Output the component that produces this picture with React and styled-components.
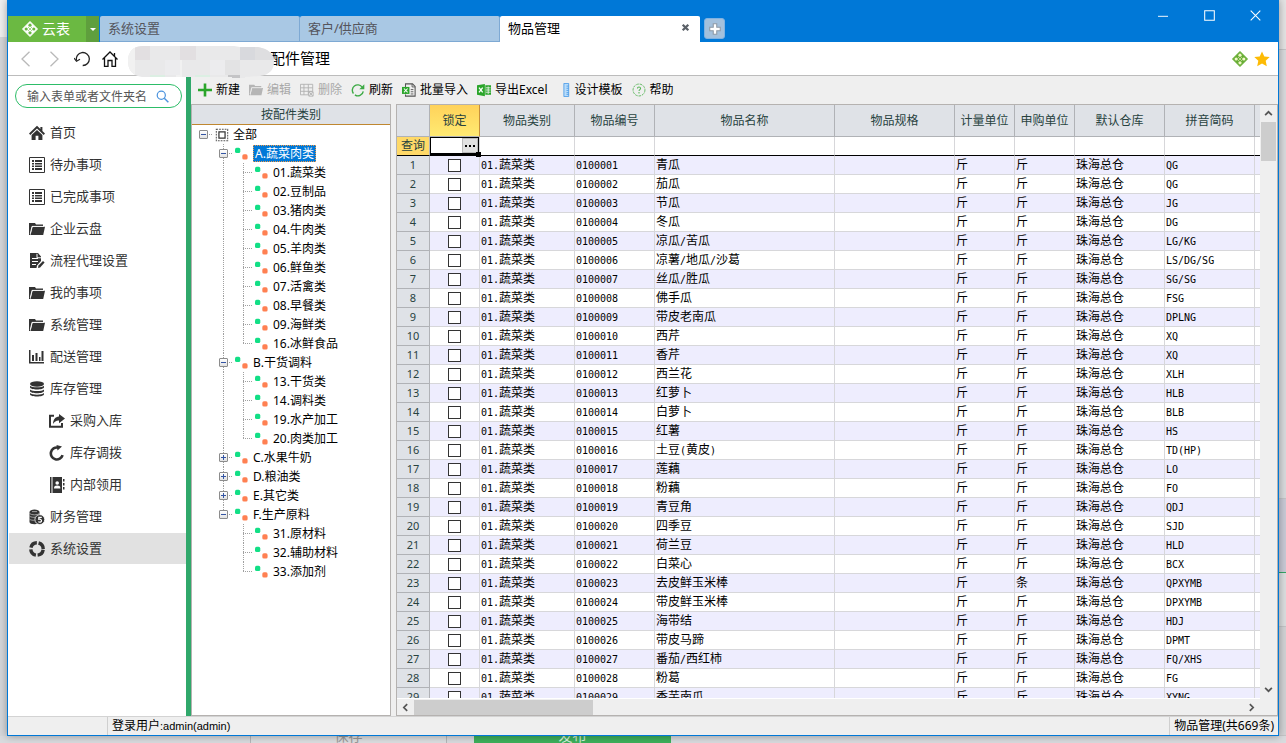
import React, { useState } from "react";
import styled, { createGlobalStyle, css } from "styled-components";

const menu = [
  { icon: "home", label: "首页" },
  { icon: "list", label: "待办事项" },
  { icon: "list", label: "已完成事项" },
  { icon: "folder", label: "企业云盘" },
  { icon: "docEdit", label: "流程代理设置" },
  { icon: "folder", label: "我的事项" },
  { icon: "folder", label: "系统管理" },
  { icon: "chart", label: "配送管理" },
  { icon: "stack", label: "库存管理" },
  { icon: "share", label: "采购入库", sub: true },
  { icon: "redo", label: "库存调拨", sub: true },
  { icon: "contacts", label: "内部领用", sub: true },
  { icon: "coins", label: "财务管理" },
  { icon: "ring", label: "系统设置" },
];

const tools = [
  { icon: "plus", label: "新建" },
  { icon: "edit", label: "编辑", disabled: true },
  { icon: "remove", label: "删除", disabled: true },
  { icon: "refresh", label: "刷新" },
  { icon: "importFile", label: "批量导入" },
  { icon: "exportFile", label: "导出Excel" },
  { icon: "ruler", label: "设计模板" },
  { icon: "help", label: "帮助" },
];

const categories = [
  {
    label: "A.蔬菜肉类",
    children: [
      "01.蔬菜类",
      "02.豆制品",
      "03.猪肉类",
      "04.牛肉类",
      "05.羊肉类",
      "06.鲜鱼类",
      "07.活禽类",
      "08.早餐类",
      "09.海鲜类",
      "16.冰鲜食品",
    ],
  },
  { label: "B.干货调料", children: ["13.干货类", "14.调料类", "19.水产加工", "20.肉类加工"] },
  { label: "C.水果牛奶" },
  { label: "D.粮油类" },
  { label: "E.其它类" },
  { label: "F.生产原料", children: ["31.原材料", "32.辅助材料", "33.添加剂"] },
];

const columns = [
  { title: "物品类别", width: 95 },
  { title: "物品编号", width: 80 },
  { title: "物品名称", width: 180 },
  { title: "物品规格", width: 120 },
  { title: "计量单位", width: 60 },
  { title: "申购单位", width: 60 },
  { title: "默认仓库", width: 90 },
  { title: "拼音简码", width: 90 },
  { title: "计价单位" },
];

const items = [
  ["青瓜", "QG"],
  ["茄瓜", "QG"],
  ["节瓜", "JG"],
  ["冬瓜", "DG"],
  ["凉瓜/苦瓜", "LG/KG"],
  ["凉薯/地瓜/沙葛", "LS/DG/SG"],
  ["丝瓜/胜瓜", "SG/SG"],
  ["佛手瓜", "FSG"],
  ["带皮老南瓜", "DPLNG"],
  ["西芹", "XQ"],
  ["香芹", "XQ"],
  ["西兰花", "XLH"],
  ["红萝卜", "HLB"],
  ["白萝卜", "BLB"],
  ["红薯", "HS"],
  ["土豆(黄皮)", "TD(HP)"],
  ["莲藕", "LO"],
  ["粉藕", "FO"],
  ["青豆角", "QDJ"],
  ["四季豆", "SJD"],
  ["荷兰豆", "HLD"],
  ["白菜心", "BCX"],
  ["去皮鲜玉米棒", "QPXYMB", "条"],
  ["带皮鲜玉米棒", "DPXYMB"],
  ["海带结", "HDJ"],
  ["带皮马蹄", "DPMT"],
  ["番茄/西红柿", "FQ/XHS"],
  ["粉葛", "FG"],
  ["香芋南瓜", "XYNG"],
];

const Svg = ({ size = 16, children }) => (
  <svg width={size} height={size} viewBox="0 0 16 16" fill="none" aria-hidden="true">
    {children}
  </svg>
);

const Folder = ({ color, light }) => (
  <>
    <path d="M0 2h6l1 1.500h7V5H3L1.200 12.500V14H0z" fill={color} />
    <path d="M3.600 5.800H16L14.200 14H1.600z" fill={color} />
    <path d="M1.300 12.600 3 5.400h12" stroke={light} strokeWidth=".8" />
  </>
);

const icons = {
  home: (
    <>
      <path d="M8 .8 0 8.600l1.300 1.300L8 3.600l6.700 6.300L16 8.600l-2.600-2.500V2h-2v2.100z" fill="#333" />
      <path d="M8 4.900 2.600 10v5h4v-4.200h2.800V15h4v-5z" fill="#333" />
    </>
  ),
  list: (
    <>
      <path d="M.5.5h15v15H.5z" stroke="#333" />
      <path d="M3 3h2v2H3zM6 3h7v2H6zM3 6h2v1.500H3zM6 6h7v1.500H6zM3 8.600h2V10H3zM6 8.600h7V10H6zM3 11h2v2H3zM6 11h7v2H6z" fill="#333" />
    </>
  ),
  folder: <Folder color="#333" light="#fff" />,
  docEdit: (
    <>
      <path d="M1 0h8l3 3.500V8l-4 4.500L7.500 15H1z" fill="#333" />
      <path d="M3 5.500h6M3 8.500h6M3 11.500h4" stroke="#fff" strokeWidth="1.200" />
      <path d="M8 .8v4h4" stroke="#fff" />
      <path d="m9 15 .5-2.500L14 8l1.600 1.600-4.500 4.800z" fill="#333" />
    </>
  ),
  chart: <path d="M0 1h1.500v12H15v1.600H0zM3 6h2v6H3zM6.500 4h2v8h-2zM10 8h1.500v4H10zM12.500 2h2v10h-2z" fill="#333" />,
  stack: (
    <>
      <ellipse cx="8" cy="3" rx="7" ry="2.700" fill="#333" />
      <path d="M1 4.700c2 2.200 12 2.200 14 0v1.600c0 3-14 3-14 0zM1 8.400c2 2.200 12 2.200 14 0V10c0 3-14 3-14 0zM1 12.100c2 2.200 12 2.200 14 0v1.200c0 3-14 3-14 0z" fill="#333" />
    </>
  ),
  share: (
    <>
      <path d="M5 2.700H1v11h12V10" stroke="#333" strokeWidth="2" />
      <path d="M10 1l6 4.600-6 4.600V7.400C7.400 7.200 5.500 8.400 4 11c.2-4.500 2.200-7.200 6-7.500z" fill="#333" />
    </>
  ),
  redo: (
    <>
      <path d="M13.600 10.200A6 6 0 1 1 9 2.600" stroke="#333" strokeWidth="2.600" />
      <path d="M7.500 0 13 1.500 8.500 5.500z" fill="#333" />
    </>
  ),
  contacts: (
    <>
      <path d="M1 0h1.500v16H1zM3.500 0H13v16H3.500zM14 2h1.500v2.500H14zM14 6h1.500v2.500H14zM14 10h1.500v2.500H14z" fill="#333" />
      <circle cx="8.200" cy="6" r="1.800" fill="#fff" />
      <path d="M5 11.500c0-2.400 1.200-3 3.200-3s3.200.6 3.200 3z" fill="#fff" />
    </>
  ),
  coins: (
    <>
      <path d="M.5 3C.5-.5 10.500-.5 10.500 3v10c0 3-10 3-10 0z" fill="#333" />
      <path d="M.5 4.500c2 1.800 8 1.800 10 0M.5 7.200c1.500 1 4 1.400 6 1M.5 10.200c1.500 1 3 1.200 5 1M3 2.600h5" stroke="#ccc" strokeWidth=".7" />
      <circle cx="10.800" cy="10.600" r="4.900" fill="#333" stroke="#fff" strokeWidth=".8" />
      <path d="M12.800 8.300h-3v2c3-.6 3.500 2.400 1.500 2.800-.8.2-1.500 0-2-.5" stroke="#fff" strokeWidth="1.200" />
    </>
  ),
  ring: (
    <circle cx="8" cy="8" r="6.200" stroke="#333" strokeWidth="3.400" strokeDasharray="7.940 1.800" strokeDashoffset="-.9" />
  ),
  plus: <path d="M6.500.5h3v6H16v3H9.500v6h-3v-6H0v-3h6.500z" fill="#2aa52a" />,
  edit: <Folder color="#b5b5b5" light="#efefef" />,
  remove: (
    <>
      <path d="M.5 1.500h14M.5 5.500h14M.5 9.500h14M.5 13.500h9M.5 1.500v12M4.500 1.500v12M9.500 1.500v12M14.500 1.500v8" stroke="#b0b0b0" />
      <path d="m10.500 10.500 4 4m0-4-4 4M10 10h5v5h-5z" stroke="#b0b0b0" />
    </>
  ),
  refresh: (
    <>
      <path d="M14 9.500A6 6 0 0 1 4.500 13.500M2.800 12A6 6 0 0 1 12.500 4.500" stroke="#3daa45" strokeWidth="1.600" />
      <path d="M15.200 1.500v5.700H9.500z" fill="#3daa45" />
    </>
  ),
  importFile: (
    <>
      <path d="M4 5V1h8l3 3v11H4v-2" stroke="#555" strokeWidth="1.200" />
      <path d="M11.500 1v3.500H15M10 7.500h3M10 10h3M10 12.500h3" stroke="#555" />
      <path d="M0 4.500h8.500v8H0z" fill="#2aa52a" />
      <path d="m2.200 6.300 4.200 4.500m0-4.500-4.200 4.500" stroke="#fff" strokeWidth="1.200" />
    </>
  ),
  exportFile: (
    <>
      <path d="M0 2.500 9 1v14l-9-1.500zM9.500 2.500H16v11H9.500z" fill="#2aa52a" />
      <path d="m2.300 5.300 4.200 5.500m0-5.500-4.200 5.500" stroke="#fff" strokeWidth="1.500" />
      <path d="M10 5.500h5.500M10 8h5.500M10 10.500h5.500M12.800 4v8.500" stroke="#e8f5e8" />
    </>
  ),
  ruler: (
    <>
      <path d="M9 .5h5.500v15H9z" fill="#b8dcfa" stroke="#4b9be8" />
      <path d="M12 3.500h2.500M12 6h2.500M12 8.500h2.500M12 11h2.500M12 13h2.500" stroke="#4b9be8" />
    </>
  ),
  help: (
    <>
      <circle cx="8" cy="8" r="6.800" stroke="#58b558" strokeDasharray="3 1" />
      <path d="M6.200 6.300C6.200 4 9.800 4 9.800 6.200c0 1.300-1.800 1.400-1.800 3M8 10.400V12" stroke="#58b558" strokeWidth="1.200" />
    </>
  ),
  back: <path d="M11.500.8 4 8l7.500 7.200" stroke="#b9b9b9" strokeWidth="1.300" />,
  forward: <path d="M4.500.8 12 8l-7.500 7.200" stroke="#b9b9b9" strokeWidth="1.300" />,
  undo: (
    <>
      <path d="M2.500 9.500a6.500 6.500 0 1 1 6.200 5" stroke="#222" strokeWidth="1.300" />
      <path d="m0 7 2.500 3.300L6 8.300" stroke="#222" strokeWidth="1.200" />
    </>
  ),
  homeLine: <path d="M.5 8.500 8 1l7.500 7.500M2.500 7v8.300H6V9.500h4v5.800h3.500V7M12.500 5V2" stroke="#111" strokeWidth="1.300" />,
  star: (
    <path d="m8 .6 2.300 4.900 5.400.6-4 3.700 1.100 5.400L8 12.600l-4.800 2.600 1.100-5.400-4-3.700 5.400-.6z" fill="#fdbb05" />
  ),
  all: (
    <>
      <path d="M1.500 1.500h13v13h-13z" stroke="#555" strokeWidth="1.200" strokeDasharray="2 1.200" />
      <path d="M4.500 4.500h7v7h-7z" stroke="#333" strokeWidth="1.400" />
    </>
  ),
  node: (
    <>
      <rect x="0" y="1" width="6.500" height="6.500" rx="2" fill="#12df86" />
      <rect x="9" y="9" width="6.500" height="6.500" rx="2" fill="#ff8052" />
    </>
  ),
  search: (
    <>
      <circle cx="6.500" cy="6.500" r="5" stroke="#4b93de" strokeWidth="1.500" />
      <path d="m10.200 10.200 5 5" stroke="#4b93de" strokeWidth="1.800" />
    </>
  ),
  up: <path d="m2 11 6-6 6 6" stroke="#555" strokeWidth="3" />,
  down: <path d="m2 5 6 6 6-6" stroke="#555" strokeWidth="3" />,
  left: <path d="m11 2-6 6 6 6" stroke="#555" strokeWidth="3" />,
  right: <path d="m5 2 6 6-6 6" stroke="#555" strokeWidth="3" />,
  addTab: <path d="M6 2h4v4h4v4h-4v4H6v-4H2V6h4z" fill="#fff" stroke="#8d98a5" strokeWidth="1.200" />,
  closeTab: <path d="m3 3 10 10M13 3 3 13" stroke="#5b6168" strokeWidth="4" />,
  minimize: <path d="M0 8.500h16" stroke="#fff" strokeWidth="1.500" />,
  maximize: <path d="M1 1h14v14H1z" stroke="#fff" strokeWidth="1.500" />,
  close: <path d="m1 1 14 14M15 1 1 15" stroke="#fff" strokeWidth="1.500" />,
};

const Icon = ({ name, size }) => <Svg size={size}>{icons[name]}</Svg>;

const Clover = ({ color, hole }) => (
  <Svg>
    <path d="M8 .5 15.500 8 8 15.500.5 8z" fill={color} stroke={color} strokeLinejoin="round" />
    <g fill={hole}>
      <circle cx="8" cy="4.200" r="1.600" />
      <circle cx="8" cy="11.800" r="1.600" />
      <circle cx="4.200" cy="8" r="1.600" />
      <circle cx="11.800" cy="8" r="1.600" />
    </g>
    <path d="m6 6 4 4m0-4-4 4" stroke={hole} strokeWidth=".6" />
  </Svg>
);

// half-width characters are drawn on a 6px pitch inside the grid
const CellText = ({ children }) =>
  children
    .split(/([\x20-\x7e]+)/)
    .filter(Boolean)
    .map((part, i) => (/[\x20-\x7e]/.test(part) ? <Mono key={i}>{part}</Mono> : part));

function CategoryTree() {
  const [selected, setSelected] = useState("A.蔬菜肉类");

  return (
    <TreePanel>
      <TreeHeader>按配件类别</TreeHeader>
      <TreeRow>
        <Guide $across>
          <Expander aria-label="折叠" />
        </Guide>
        <TreeIcon>
          <Icon name="all" size={14} />
        </TreeIcon>
        <TreeLabel onClick={() => setSelected("全部")} $selected={selected === "全部"}>
          全部
        </TreeLabel>
      </TreeRow>
      {categories.map((cat, i) => {
        const last = i === categories.length - 1;
        const children = cat.children || [];
        return (
          <React.Fragment key={cat.label}>
            <TreeRow>
              <Guide />
              <Guide $across $down={last ? "half" : "full"}>
                <Expander $closed={!cat.children} aria-label={cat.children ? "折叠" : "展开"} />
              </Guide>
              <TreeIcon>
                <Icon name="node" size={13} />
              </TreeIcon>
              <TreeLabel onClick={() => setSelected(cat.label)} $selected={selected === cat.label}>
                {cat.label}
              </TreeLabel>
            </TreeRow>
            {children.map((child, j) => (
              <TreeRow key={child}>
                <Guide />
                <Guide $down={last ? undefined : "full"} />
                <Guide $across $down={j === children.length - 1 ? "half" : "full"} />
                <TreeIcon>
                  <Icon name="node" size={13} />
                </TreeIcon>
                <TreeLabel onClick={() => setSelected(child)} $selected={selected === child}>
                  {child}
                </TreeLabel>
              </TreeRow>
            ))}
          </React.Fragment>
        );
      })}
    </TreePanel>
  );
}

function ItemGrid() {
  return (
    <GridPanel>
      <GridView>
        <Table>
          <colgroup>
            <Col $width={33} />
            <Col $width={50} />
            {columns.map((col) => (
              <Col key={col.title} $width={col.width} />
            ))}
          </colgroup>
          <thead>
            <tr>
              <HeadCell />
              <HeadCell $active>锁定</HeadCell>
              {columns.map((col) => (
                <HeadCell key={col.title}>{col.title}</HeadCell>
              ))}
            </tr>
          </thead>
          <tbody>
            <QueryRow>
              <QueryLabel>查询</QueryLabel>
              <QueryCell>
                <QueryBox>
                  <QueryInput aria-label="锁定" />
                  <MoreButton aria-label="选择">
                    <Dot />
                    <Dot />
                    <Dot />
                  </MoreButton>
                  <FillHandle />
                </QueryBox>
              </QueryCell>
              {columns.map((col) => (
                <Cell key={col.title} />
              ))}
            </QueryRow>
            {items.map(([name, code, unit = "斤"], i) => (
              <Row key={i}>
                <RowNumber>{i + 1}</RowNumber>
                <CheckCell>
                  <CheckBox aria-label={"锁定 " + name} />
                </CheckCell>
                <Cell>
                  <CellText>01.蔬菜类</CellText>
                </Cell>
                <Cell>
                  <CellText>{"01" + String(i + 1).padStart(5, "0")}</CellText>
                </Cell>
                <Cell>
                  <CellText>{name}</CellText>
                </Cell>
                <Cell />
                <Cell>斤</Cell>
                <Cell>{unit}</Cell>
                <Cell>珠海总仓</Cell>
                <Cell>
                  <CellText>{code}</CellText>
                </Cell>
                <Cell />
              </Row>
            ))}
          </tbody>
        </Table>
      </GridView>
      <VScroll>
        <ScrollButton aria-label="向上">
          <Icon name="up" size={9} />
        </ScrollButton>
        <VThumb />
        <ScrollButton aria-label="向下">
          <Icon name="down" size={9} />
        </ScrollButton>
      </VScroll>
      <HScroll>
        <ScrollButton aria-label="向左">
          <Icon name="left" size={9} />
        </ScrollButton>
        <HThumb />
        <ScrollButton aria-label="向右">
          <Icon name="right" size={9} />
        </ScrollButton>
      </HScroll>
    </GridPanel>
  );
}

function App() {
  return (
    <Desktop>
      <GlobalStyle />
      <DesktopLeft />
      <Window>
        <TitleBar>
          <LogoButton>
            <Clover color="#fff" hole="#6bb942" />
            云表
          </LogoButton>
          <LogoMenu aria-label="菜单" />
          <Tab>系统设置</Tab>
          <Tab>客户/供应商</Tab>
          <Tab $active>
            物品管理
            <Icon name="closeTab" size={9} />
          </Tab>
          <AddTab aria-label="新标签">
            <Icon name="addTab" size={14} />
          </AddTab>
          <WindowButtons>
            <WindowButton aria-label="最小化">
              <Icon name="minimize" size={10} />
            </WindowButton>
            <WindowButton aria-label="最大化">
              <Icon name="maximize" size={11} />
            </WindowButton>
            <WindowButton aria-label="关闭">
              <Icon name="close" size={11} />
            </WindowButton>
          </WindowButtons>
        </TitleBar>
        <AddressBar>
          <NavButton aria-label="后退">
            <Icon name="back" />
          </NavButton>
          <NavButton aria-label="前进">
            <Icon name="forward" />
          </NavButton>
          <NavButton aria-label="撤销">
            <Icon name="undo" />
          </NavButton>
          <NavButton aria-label="主页">
            <Icon name="homeLine" />
          </NavButton>
          <Masked>
            <Mosaic viewBox="0 0 146 34" aria-hidden="true">
              <clipPath id="blob">
                <path d="M14 1h92l6 1h18q16 3 16 15t-14 14l-15 1v1h-13v-1H14Q0 30 0 16T14 1z" />
              </clipPath>
              <g clipPath="url(#blob)">
                <path d="M0 0h146v34H0z" fill="#e9e9ea" />
                <path d="M0 0h7v34H0zM48 15h6v19h-6z" fill="#f1f1f1" />
                <path d="M7 0h15v15H7zM52 0h16v15H52z" fill="#e2dfe1" />
                <path d="M112 0h15v15h-15z" fill="#d8d9dd" />
                <path d="M127 0h19v15h-19z" fill="#dedee0" />
                <path d="M37 15h15v15H37zM82 15h15v15H82z" fill="#ececee" />
                <path d="M22 30h15v4H22zM67 30h15v4H67z" fill="#dcefe3" />
                <path d="M97 15h15v15H97z" fill="#e3e3e4" />
                <path d="M100 30h12v4h-12z" fill="#c4c4c6" />
              </g>
            </Mosaic>
          </Masked>
          <PageTitle>配件管理</PageTitle>
          <Clover color="#66ad33" hole="#f0f7c8" />
          <Icon name="star" />
        </AddressBar>
        <Body>
          <Sidebar>
            <SearchBox>
              <SearchInput aria-label="搜索" placeholder="输入表单或者文件夹名" />
              <Icon name="search" size={13} />
            </SearchBox>
            <nav>
              {menu.map((item, i) => (
                <MenuLink key={item.label} href="#" $sub={item.sub} $active={i === menu.length - 1}>
                  <Icon name={item.icon} />
                  {item.label}
                </MenuLink>
              ))}
            </nav>
          </Sidebar>
          <Main>
            <Toolbar>
              {tools.map((tool) => (
                <ToolButton key={tool.label} disabled={tool.disabled}>
                  <Icon name={tool.icon} size={14} />
                  {tool.label}
                </ToolButton>
              ))}
            </Toolbar>
            <Panels>
              <CategoryTree />
              <ItemGrid />
            </Panels>
          </Main>
        </Body>
        <StatusBar>
          <StatusUser>
            登录用户<Account>:admin(admin)</Account>
          </StatusUser>
          <StatusCount>物品管理(共669条)</StatusCount>
        </StatusBar>
      </Window>
      <DesktopRight>
        <Strip $grow={49} $color="#e4e4e4" />
        <Strip $grow={451} $color="#d9dbdd" />
        <Strip $grow={74} $color="#c9cad6" $green />
        <Strip $grow={53} $color="#dcdedf" />
        <Strip $grow={109} $color="#d2d3d5" />
      </DesktopRight>
      <DesktopBottom>
        <BehindButton>保存</BehindButton>
        <BehindButton $primary>发布</BehindButton>
      </DesktopBottom>
    </Desktop>
  );
}

export default App;

const GlobalStyle = createGlobalStyle`
  * {
    box-sizing: border-box;
  }
  body {
    margin: 0;
    font-family: "Noto Sans", "Noto Sans CJK SC", sans-serif;
    font-size: 12px;
    color: #000;
  }
  button, input {
    font: inherit;
    color: inherit;
    border: none;
    padding: 0;
    margin: 0;
    background: none;
  }
  svg {
    flex-shrink: 0;
    display: block;
  }
`;

const Desktop = styled.div`
  display: grid;
  grid-template-columns: 7px minmax(0, 1fr) 7px;
  grid-template-rows: minmax(0, 1fr) 7px;
  height: 100vh;
  overflow: hidden;
  background: #d9dbde;
`;

const DesktopLeft = styled.div`
  background: linear-gradient(#f0f0f0 37px, #d5d7da 37px);
`;

const DesktopRight = styled.div`
  display: flex;
  flex-direction: column;
`;

const Strip = styled.div`
  flex: ${(p) => p.$grow} 1 0;
  background: ${(p) => p.$color};
  border-bottom: 1px solid ${(p) => (p.$green ? "#35a566" : "#c4c5c7")};
`;

const DesktopBottom = styled.div`
  grid-column: 1 / -1;
  display: flex;
  gap: 27px;
  padding-left: 250px;
  overflow: hidden;
`;

const BehindButton = styled.button`
  width: 197px;
  height: 7px;
  display: flex;
  align-items: flex-end;
  justify-content: center;
  overflow: hidden;
  font-size: 14px;
  line-height: 14px;
  color: ${(p) => (p.$primary ? "#d5f0dd" : "#999")};
  background: ${(p) => (p.$primary ? "#3db05b" : "#dcdee0")};
  border: solid ${(p) => (p.$primary ? "#3db05b" : "#b4b6b8")};
  border-width: 0 1px;
`;

const Window = styled.div`
  display: flex;
  flex-direction: column;
  min-width: 0;
  border: solid #0078d7;
  border-width: 0 1px 1px;
  box-shadow: 0 0 8px rgba(0, 0, 0, 0.35);
  background: #efefef;
  z-index: 1;
`;

const TitleBar = styled.div`
  display: flex;
  align-items: flex-end;
  height: 42px;
  background: #0078d7;
`;

const LogoButton = styled.button`
  display: flex;
  align-items: center;
  gap: 4px;
  width: 78px;
  height: 26px;
  padding-left: 14px;
  background: #6bb942;
  color: #fff;
  font-size: 14px;
  line-height: 26px;
`;

const LogoMenu = styled.button`
  width: 13px;
  height: 26px;
  margin-right: 1px;
  display: flex;
  align-items: center;
  justify-content: center;
  background: #5f9f3d;
  &::after {
    content: "";
    border: solid transparent;
    border-width: 3px 3px 0;
    border-top-color: #fff;
  }
`;

const Tab = styled.button`
  display: flex;
  align-items: center;
  justify-content: space-between;
  width: 200px;
  height: 26px;
  padding: 0 9px 2px 8px;
  background: #a9c8e4;
  border: solid #7ea9d3;
  border-width: 0 1px 1px 0;
  border-radius: 2px 2px 0 0;
  color: #55555c;
  font-size: 13px;
  line-height: 20px;
  ${(p) =>
    p.$active &&
    css`
      background: #fff;
      border-color: #fff;
      color: #000;
    `}
`;

const AddTab = styled.button`
  display: flex;
  align-items: center;
  justify-content: center;
  width: 21px;
  height: 21px;
  margin: 0 0 3px 4px;
  background: #a3c0dc;
  border: 1px solid #7fb2e2;
  border-radius: 3px;
`;

const WindowButtons = styled.div`
  display: flex;
  align-self: flex-start;
  margin-left: auto;
`;

const WindowButton = styled.button`
  display: flex;
  align-items: center;
  justify-content: center;
  width: 46px;
  height: 31px;
`;

const AddressBar = styled.div`
  display: flex;
  align-items: center;
  gap: 6px;
  height: 34px;
  padding: 0 8px 0 4px;
  background: #fff;
  border-bottom: 1px solid #bcbcbc;
`;

const NavButton = styled.button`
  display: flex;
  justify-content: center;
  width: 28px;
  margin-right: -6px;
`;

const Masked = styled.div`
  position: relative;
  width: 136px;
  height: 33px;
  margin-left: 4px;
`;

const Mosaic = styled.svg`
  position: absolute;
  top: 3px;
  left: 0;
  width: 146px;
  height: 34px;
  z-index: 1;
`;

const PageTitle = styled.h1`
  flex: 1;
  margin: 0 0 2px;
  font-size: 15px;
  font-weight: normal;
  line-height: 22px;
`;

const Body = styled.div`
  display: flex;
  flex: 1;
  min-height: 0;
`;

const Sidebar = styled.aside`
  width: 183px;
  flex-shrink: 0;
  padding-left: 1px;
  background: #fff;
  border-right: 5px solid #30a86b;
`;

const SearchBox = styled.label`
  display: flex;
  align-items: center;
  height: 24px;
  margin: 8px 4px 9px 6px;
  padding: 0 12px 0 11px;
  border: 1px solid #2dbd68;
  border-radius: 12px;
`;

const SearchInput = styled.input`
  flex: 1;
  min-width: 0;
  height: 20px;
  outline: none;
  &::placeholder {
    color: #555;
    opacity: 1;
  }
`;

const MenuLink = styled.a`
  display: flex;
  align-items: center;
  gap: 5px;
  height: 31px;
  margin-bottom: 1px;
  padding-left: ${(p) => (p.$sub ? 40 : 20)}px;
  background: ${(p) => (p.$active ? "#e1e1e1" : "transparent")};
  color: #333;
  font-size: 13px;
  line-height: 31px;
  text-decoration: none;
`;

const Main = styled.main`
  flex: 1;
  display: flex;
  flex-direction: column;
  min-width: 0;
`;

const Toolbar = styled.div`
  display: flex;
  align-items: center;
  gap: 9px;
  height: 28px;
  padding-left: 7px;
`;

const ToolButton = styled.button`
  display: flex;
  align-items: center;
  gap: 4px;
  line-height: 18px;
  white-space: nowrap;
  &:disabled {
    color: #a8a8a8;
  }
`;

const Panels = styled.div`
  display: flex;
  flex: 1;
  gap: 5px;
  min-height: 0;
`;

const TreePanel = styled.section`
  width: 200px;
  flex-shrink: 0;
  overflow: hidden;
  background: #fff;
  border: 1px solid #b5b2b0;
`;

const TreeHeader = styled.div`
  height: 20px;
  background: #dfe2e7;
  border-bottom: 1px solid #bf8730;
  color: #28423f;
  line-height: 20px;
  text-align: center;
`;

const TreeRow = styled.div`
  display: flex;
  align-items: center;
  height: 19px;
  padding-left: 1px;
`;

const Guide = styled.div`
  display: flex;
  align-items: center;
  justify-content: center;
  width: 20px;
  height: 19px;
  padding-left: 1px;
  background-image: repeating-linear-gradient(#a0a0a0 0 1px, transparent 1px 2px),
    repeating-linear-gradient(90deg, #a0a0a0 0 1px, transparent 1px 2px);
  background-repeat: no-repeat;
  background-position: 10px 0, 10px 9px;
  background-size: 1px ${(p) => ({ full: "19px", half: "9px" }[p.$down] || 0)},
    ${(p) => (p.$across ? "10px" : 0)} 1px;
`;

const Expander = styled.button`
  position: relative;
  width: 9px;
  height: 9px;
  background: linear-gradient(#fff, #e2e2e2);
  border: 1px solid #8c8c8c;
  border-radius: 1px;
  &::before,
  &::after {
    content: "";
    position: absolute;
    background: #3455a4;
  }
  &::before {
    left: 1px;
    top: 3px;
    width: 5px;
    height: 1px;
  }
  &::after {
    left: 3px;
    top: 1px;
    width: 1px;
    height: ${(p) => (p.$closed ? 5 : 0)}px;
  }
`;

const TreeIcon = styled.span`
  width: 13px;
  margin: 0 4px 0 2px;
`;

const TreeLabel = styled.button`
  padding: 0 1px;
  line-height: 17px;
  white-space: nowrap;
  ${(p) =>
    p.$selected &&
    css`
      margin-left: 1px;
      padding: 0 2px;
      background: #0078d7;
      color: #fff;
      outline: 1px dotted #f39a45;
      outline-offset: -1px;
    `}
`;

const GridPanel = styled.section`
  flex: 1;
  min-width: 0;
  display: grid;
  grid-template-columns: minmax(0, 1fr) 17px;
  grid-template-rows: minmax(0, 1fr) 17px;
  background: #efefef;
  border: 1px solid #b5b2b0;
`;

const GridView = styled.div`
  overflow: hidden;
  background: #fff;
`;

const Table = styled.table`
  width: 100%;
  min-width: 918px;
  table-layout: fixed;
  border-collapse: separate;
  border-spacing: 0;
`;

const Col = styled.col`
  width: ${(p) => (p.$width ? p.$width + "px" : "auto")};
`;

const HeadCell = styled.th`
  height: 32px;
  padding: 1px 0 0;
  background: ${(p) => (p.$active ? "linear-gradient(#ffd25a, #ffea72)" : "#dfe2e7")};
  border: solid #b0b2b6;
  border-width: 0 1px 1px 0;
  border-right-color: ${(p) => (p.$active ? "#c58f3c" : "#b0b2b6")};
  color: #28423f;
  font-weight: normal;
  line-height: 18px;
`;

const Row = styled.tr`
  background: #fff;
  &:nth-child(even) {
    background: #eeedfe;
  }
`;

const Cell = styled.td`
  height: 19px;
  padding: 0 0 0 1px;
  border: solid #d7d7da;
  border-width: 0 1px 1px 0;
  line-height: 18px;
  white-space: nowrap;
  overflow: hidden;
`;

const RowNumber = styled(Cell).attrs({ as: "th", scope: "row" })`
  padding: 0;
  background: #dfe2e7;
  border-color: #b0b2b6;
  color: #28423f;
  font-size: 11px;
  font-weight: normal;
  text-align: center;
`;

const QueryRow = styled.tr`
  & > * {
    border-bottom-color: #000;
  }
`;

const QueryLabel = styled(RowNumber)`
  background: #ffd968;
  border-bottom-color: #000;
  font-size: 12px;
`;

const QueryCell = styled(Cell)`
  padding: 0;
  overflow: visible;
`;

const QueryBox = styled.div`
  position: relative;
  display: flex;
  height: 18px;
  border: solid #000;
  border-width: 1px 1px 2px;
`;

const QueryInput = styled.input`
  flex: 1;
  min-width: 0;
  outline: none;
`;

const MoreButton = styled.button`
  display: flex;
  align-items: center;
  justify-content: center;
  gap: 2px;
  width: 16px;
  background: #e1e1e1;
  border: 1px solid #bbb;
`;

const Dot = styled.i`
  width: 2px;
  height: 2px;
  background: #000;
`;

const FillHandle = styled.span`
  position: absolute;
  right: -3px;
  bottom: -4px;
  width: 5px;
  height: 5px;
  background: #000;
`;

const CheckCell = styled(Cell)`
  padding: 0;
`;

const CheckBox = styled.input.attrs({ type: "checkbox" })`
  appearance: none;
  display: block;
  width: 13px;
  height: 13px;
  margin: 0 auto;
  background: #fff;
  border: 1px solid #333;
  &:checked {
    background: #333;
    box-shadow: inset 0 0 0 2px #fff;
  }
`;

const Mono = styled.span`
  font-family: "DejaVu Sans Mono", monospace;
  font-size: 10px;
  line-height: 10px;
`;

const VScroll = styled.div`
  display: flex;
  flex-direction: column;
  align-items: center;
`;

const HScroll = styled.div`
  display: flex;
  align-items: center;
  border-top: 1px solid #fff;
`;

const ScrollButton = styled.button`
  display: flex;
  align-items: center;
  justify-content: center;
  width: 17px;
  height: 17px;
  flex-shrink: 0;
  &:last-child {
    margin: auto 0 0 auto;
  }
  ${HScroll} &:last-child {
    margin-top: 0;
  }
`;

const VThumb = styled.div`
  width: 15px;
  height: 39px;
  background: #cdcdcd;
`;

const HThumb = styled.div`
  width: 179px;
  height: 15px;
  background: #cdcdcd;
`;

const StatusBar = styled.footer`
  display: flex;
  justify-content: space-between;
  height: 19px;
  padding-left: 99px;
  border-top: 1px solid #d3d3d3;
  line-height: 18px;
`;

const StatusUser = styled.span`
  padding-left: 4px;
  border-left: 1px solid #cfcfcf;
`;

const Account = styled.span`
  font-family: "Liberation Sans", sans-serif;
  font-size: 11px;
`;

const StatusCount = styled.span`
  padding: 0 4px;
  border-left: 1px solid #cfcfcf;
`;
